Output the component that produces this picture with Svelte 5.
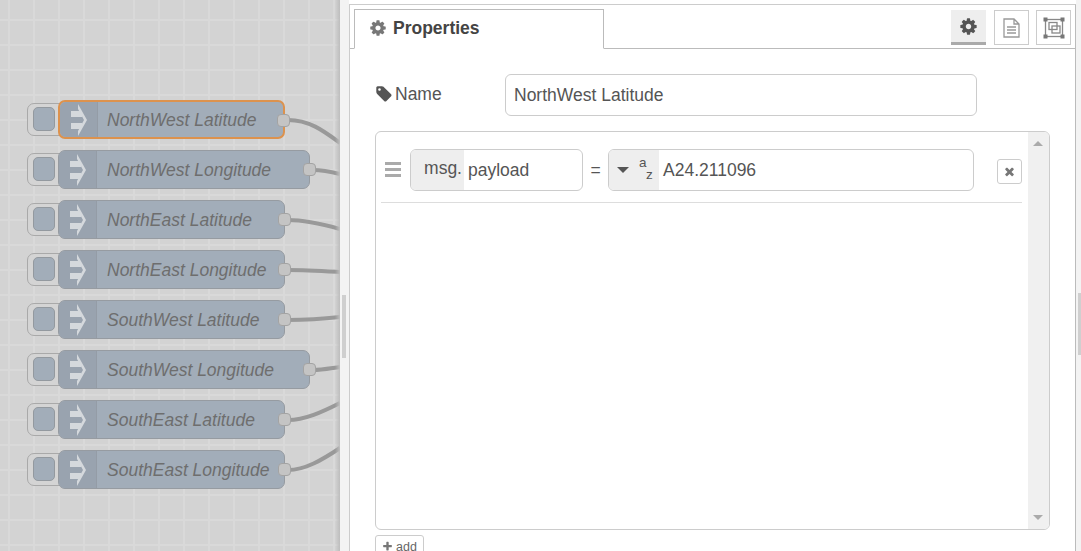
<script lang="ts">
  const cog = "M1152 896q0-106-75-181t-181-75-181 75-75 181 75 181 181 75 181-75 75-181zm512-109v222q0 12-8 23t-20 13l-185 28q-19 54-39 91 35 50 107 138 10 12 10 25t-9 23q-27 37-99 108t-94 71q-12 0-26-9l-138-108q-44 23-91 38-16 136-29 186-7 28-36 28h-222q-14 0-24.500-8.500t-11.500-21.500l-28-184q-49-16-90-37l-141 107q-10 9-25 9-14 0-25-11-126-114-165-168-7-10-7-23 0-12 8-23 15-21 51-66.500t54-70.500q-27-50-41-99l-183-27q-13-2-21-12.500t-8-23.500v-222q0-12 8-23t19-13l186-28q14-46 39-92-40-57-107-138-10-12-10-24 0-10 9-23 26-36 98.500-107.500t94.500-71.500q13 0 26 10l138 107q44-23 91-38 16-136 29-186 7-28 36-28h222q14 0 24.500 8.500t11.500 21.500l28 184q49 16 90 37l142-107q9-9 24-9 13 0 25 10 129 119 165 170 7 8 7 22 0 12-8 23-15 21-51 66.500t-54 70.500q26 50 41 98l183 28q13 2 21 12.500t8 23.500z";
  const tag = "M576 448q0-53-37.500-90.500t-90.500-37.500-90.500 37.500-37.500 90.500 37.500 90.500 90.500 37.500 90.500-37.500 37.500-90.500zm1067 576q0 53-37 90l-491 492q-39 37-91 37-53 0-90-37l-715-716q-38-37-64.500-101t-26.500-117v-416q0-52 38-90t90-38h416q53 0 117 26.500t102 64.500l715 714q37 39 37 91z";
  const plus = "M1600 736v192q0 40-28 68t-68 28h-416v416q0 40-28 68t-68 28h-192q-40 0-68-28t-28-68v-416h-416q-40 0-68-28t-28-68v-192q0-40 28-68t68-28h416v-416q0-40 28-68t68-28h192q40 0 68 28t28 68v416h416q40 0 68 28t28 68z";
  const times = "M1490 1322q0 40-28 68l-136 136q-28 28-68 28t-68-28l-294-294-294 294q-28 28-68 28t-68-28l-136-136q-28-28-28-68t28-68l294-294-294-294q-28-28-28-68t28-68l136-136q28-28 68-28t68 28l294 294 294-294q28-28 68-28t68 28l136 136q28 28 28 68t-28 68l-294 294 294 294q28 28 28 68z";

  const nodes = [
    { label: "NorthWest Latitude", width: 227, selected: true },
    { label: "NorthWest Longitude", width: 252 },
    { label: "NorthEast Latitude", width: 227 },
    { label: "NorthEast Longitude", width: 227 },
    { label: "SouthWest Latitude", width: 227 },
    { label: "SouthWest Longitude", width: 252 },
    { label: "SouthEast Latitude", width: 227 },
    { label: "SouthEast Longitude", width: 227 }
  ];

  const wires = [
    "M288 120 C310 120 325 132 340 143",
    "M313 170 C322 170 332 172 340 174",
    "M288 220 C305 220 322 224 340 229",
    "M288 270 C305 270 322 271 340 272",
    "M288 320 C305 320 322 319 340 317",
    "M313 370 C322 370 332 368 340 367",
    "M288 420 C305 420 322 412 340 403",
    "M288 470 C305 470 322 460 340 448"
  ];
</script>

<div class="app">
  <div class="canvas">
    <svg class="wires" width="340" height="551">
      {#each wires as d}
        <path {d} fill="none" stroke="#999" stroke-width="4" />
      {/each}
    </svg>

    {#each nodes as node, i}
      <div class="node-wrap" style="top: {100 + i * 50}px">
        <div class="inject"><div class="inject-inner"></div></div>
        <div class="node" class:selected={node.selected} style="width: {node.width}px">
          <div class="node-icon">
            <svg width="18" height="32" viewBox="0 0 18 32">
              <path d="M1 7h11v6H1zM1 19h11v6H1zM8 0l9 16-9 16v-5l6-11-6-11z" fill="#d5d9dd" />
            </svg>
          </div>
          <div class="node-label">{node.label}</div>
          <div class="port"></div>
        </div>
      </div>
    {/each}
    <div class="canvas-shade"></div>
  </div>

  <div class="sash"><div class="sash-handle"></div></div>

  <div class="panel">
    <div class="tabs">
      <div class="tab">
        <svg class="tab-icon" viewBox="0 0 1792 1792"><path d={cog} /></svg>
        <span>Properties</span>
      </div>
      <div class="tab-buttons">
        <div class="tab-button active">
          <svg width="19" height="19" viewBox="0 0 1792 1792"><path d={cog} fill="#555" /></svg>
        </div>
        <div class="tab-button">
          <svg width="17" height="20" viewBox="0 0 17 20" fill="none" stroke="#999" stroke-width="1.300">
            <path d="M1 1h10l5 5v13H1zM11 1v5h5" />
            <path d="M4 9h9M4 12h9M4 15h9" />
          </svg>
        </div>
        <div class="tab-button">
          <svg width="22" height="22" viewBox="0 0 22 22" fill="none" stroke="#888" stroke-width="1.300">
            <rect x="2.500" y="2.500" width="17" height="17" />
            <rect x="6" y="5.500" width="8" height="7" />
            <rect x="9" y="9" width="8" height="7" />
            <g fill="#777" stroke="none">
              <rect x="0.500" y="0.500" width="4" height="4" />
              <rect x="17.500" y="0.500" width="4" height="4" />
              <rect x="0.500" y="17.500" width="4" height="4" />
              <rect x="17.500" y="17.500" width="4" height="4" />
            </g>
          </svg>
        </div>
      </div>
    </div>

    <div class="form">
      <div class="form-row">
        <label class="name-label" for="node-name">
          <svg width="18" height="18" viewBox="0 0 1792 1792"><path d={tag} fill="#555" /></svg>
          Name
        </label>
        <input id="node-name" class="name-input" value="NorthWest Latitude" />
      </div>

      <div class="list">
        <div class="list-body">
          <div class="rule">
            <div class="handle"><span></span><span></span><span></span></div>
            <div class="typed msg">
              <div class="prefix msg-prefix">msg.</div>
              <div class="typed-value">payload</div>
            </div>
            <div class="equals">=</div>
            <div class="typed value">
              <div class="prefix type-prefix">
                <span class="caret"></span>
                <span class="az"><i>a</i><i>z</i></span>
              </div>
              <div class="typed-value">A24.211096</div>
            </div>
            <div class="delete">
              <svg width="13" height="13" viewBox="0 0 1792 1792"><path d={times} fill="#777" /></svg>
            </div>
          </div>
        </div>
        <div class="scrollbar">
          <span class="arrow up"></span>
          <span class="arrow down"></span>
        </div>
      </div>

      <div class="add">
        <svg width="11" height="11" viewBox="0 0 1792 1792"><path d={plus} fill="#777" /></svg>
        add
      </div>
    </div>
  </div>

  <div class="gutter"><div class="gutter-thumb"></div></div>
</div>

<style>
  :global(body) {
    margin: 0;
  }

  .app {
    display: flex;
    width: 1081px;
    height: 551px;
    overflow: hidden;
    font-family: "Liberation Sans", Arial, sans-serif;
    color: #555;
  }

  .canvas {
    position: relative;
    width: 340px;
    flex: none;
    overflow: hidden;
    background-color: #d3d3d3;
    background-image:
      linear-gradient(#d9d9d9 2px, transparent 2px),
      linear-gradient(90deg, #d9d9d9 2px, transparent 2px);
    background-size: 25px 25px;
    background-position: 8px 19px;
  }

  .canvas-shade {
    position: absolute;
    top: 0;
    right: 0;
    bottom: 0;
    width: 5px;
    background: linear-gradient(90deg, transparent, #bdbdbd);
  }

  .wires {
    position: absolute;
    left: 0;
    top: 0;
  }

  .node-wrap {
    position: absolute;
    left: 27px;
  }

  .inject {
    position: absolute;
    left: 0;
    top: 3px;
    width: 40px;
    height: 33px;
    box-sizing: border-box;
    border: 1.500px solid #a9a9a9;
    border-radius: 7px;
    background: #d4d4d4;
  }

  .inject-inner {
    width: 22px;
    height: 24px;
    margin: 3px 0 0 5px;
    box-sizing: border-box;
    border: 1.500px solid #93999f;
    border-radius: 5px;
    background: #a2adb9;
  }

  .node {
    position: relative;
    margin-left: 31px;
    height: 39px;
    box-sizing: border-box;
    display: flex;
    align-items: center;
    background: #a2adb9;
    border: 1.500px solid #969ba1;
    border-radius: 7px;
  }

  .node.selected {
    border: 2px solid #dc924e;
  }

  .node-icon {
    width: 38px;
    height: 100%;
    flex: none;
    box-sizing: border-box;
    display: flex;
    align-items: center;
    justify-content: center;
    background: #99a3af;
    border-right: 1px solid #949ca6;
    border-radius: 6px 0 0 6px;
  }

  .node-label {
    margin-left: 10px;
    padding-top: 2px;
    font-size: 17.500px;
    font-style: italic;
    color: #6e6e6e;
    white-space: nowrap;
  }

  .node.selected .node-label {
    margin-left: 9px;
  }

  .port {
    position: absolute;
    right: -7px;
    top: 12px;
    width: 13px;
    height: 13px;
    box-sizing: border-box;
    border: 1.500px solid #a3a3a3;
    border-radius: 4px;
    background: #c4c4c4;
  }

  .sash {
    width: 9px;
    flex: none;
    display: flex;
    align-items: center;
    justify-content: center;
    padding-right: 2px;
    box-sizing: border-box;
    background: #f3f3f3;
    position: relative;
  }

  .sash-handle {
    width: 4px;
    height: 63px;
    margin-top: 102px;
    background: #cfcfcf;
  }

  .panel {
    flex: 1;
    margin-top: 4px;
    box-sizing: border-box;
    display: flex;
    flex-direction: column;
    background: #fff;
    border-top: 1px solid #ccc;
    border-left: 1px solid #ccc;
    border-right: 1px solid #bbb;
  }

  .tabs {
    height: 44px;
    flex: none;
    box-sizing: border-box;
    display: flex;
    justify-content: space-between;
    align-items: flex-end;
    padding: 0 4px 0 4px;
    border-bottom: 1px solid #bbb;
  }

  .tab {
    width: 250px;
    height: 40px;
    margin-bottom: -1px;
    box-sizing: border-box;
    display: flex;
    align-items: center;
    gap: 6px;
    padding: 0 0 2px 14px;
    background: #fff;
    border: 1px solid #bbb;
    border-bottom: 1px solid #fff;
    font-size: 17.500px;
    font-weight: 700;
    color: #444;
  }

  .tab-icon {
    width: 18px;
    height: 18px;
    fill: #777;
  }

  .tab-buttons {
    display: flex;
    gap: 7px;
    align-self: flex-start;
    margin-top: 5px;
  }

  .tab-button {
    width: 35px;
    height: 35px;
    box-sizing: border-box;
    display: flex;
    align-items: center;
    justify-content: center;
    background: #fff;
    border: 1px solid #ccc;
  }

  .tab-button.active {
    margin-right: 1px;
    background: #eee;
    border: none;
    border-bottom: 3px solid #aaa;
  }

  .form {
    flex: 1;
    min-height: 0;
    padding: 25px 25px 0 25px;
    overflow: hidden;
  }

  .form-row {
    display: flex;
    align-items: center;
    height: 42px;
  }

  .name-label {
    width: 130px;
    display: flex;
    align-items: center;
    gap: 2px;
    font-size: 17.500px;
    margin-top: -2px;
  }

  .name-input {
    width: 472px;
    height: 42px;
    box-sizing: border-box;
    padding: 0 8px;
    border: 1px solid #ccc;
    border-radius: 6px;
    font: inherit;
    font-size: 17.500px;
    color: #555;
    outline: none;
  }

  .list {
    display: flex;
    width: 675px;
    height: 399px;
    margin-top: 15px;
    box-sizing: border-box;
    border: 1px solid #ccc;
    border-radius: 6px;
    overflow: hidden;
  }

  .list-body {
    flex: 1;
    min-width: 0;
    padding: 0 6px 0 5px;
  }

  .rule {
    height: 71px;
    box-sizing: border-box;
    display: flex;
    align-items: flex-start;
    padding-top: 17px;
    border-bottom: 1px solid #ddd;
  }

  .handle {
    width: 16px;
    margin: 13px 0 0 4px;
    display: flex;
    flex-direction: column;
    gap: 3px;
  }

  .handle span {
    height: 3px;
    background: #aaa;
  }

  .typed {
    height: 42px;
    box-sizing: border-box;
    display: flex;
    align-items: center;
    border: 1px solid #ccc;
    border-radius: 6px;
    overflow: hidden;
    font-size: 17.500px;
  }

  .typed.msg {
    width: 173px;
    margin-left: 9px;
  }

  .typed.value {
    width: 366px;
  }

  .prefix {
    height: 100%;
    flex: none;
    display: flex;
    align-items: center;
    background: #eee;
  }

  .msg-prefix {
    width: 53px;
    justify-content: flex-end;
    padding-right: 2px;
    padding-bottom: 3px;
    box-sizing: border-box;
  }

  .type-prefix {
    width: 50px;
    padding-left: 8px;
    box-sizing: border-box;
    gap: 10px;
  }

  .caret {
    width: 0;
    height: 0;
    border-left: 6px solid transparent;
    border-right: 6px solid transparent;
    border-top: 6px solid #555;
  }

  .az {
    display: flex;
    flex-direction: column;
    width: 14px;
    font-size: 13.500px;
    line-height: 12px;
    margin-top: -2px;
  }

  .az i {
    font-style: normal;
  }

  .az i:last-child {
    padding-left: 7px;
  }

  .typed-value {
    padding-left: 4px;
  }

  .equals {
    width: 25px;
    text-align: center;
    font-size: 17.500px;
    line-height: 42px;
  }

  .delete {
    width: 25px;
    height: 25px;
    margin: 10px 0 0 23px;
    box-sizing: border-box;
    display: flex;
    align-items: center;
    justify-content: center;
    border: 1px solid #ccc;
    border-radius: 3px;
  }

  .scrollbar {
    width: 21px;
    flex: none;
    position: relative;
    background: #f0f0f0;
  }

  .arrow {
    position: absolute;
    left: 5px;
    width: 0;
    height: 0;
    border-left: 5px solid transparent;
    border-right: 5px solid transparent;
  }

  .arrow.up {
    top: 9px;
    border-bottom: 5px solid #aaa;
  }

  .arrow.down {
    bottom: 9px;
    border-top: 5px solid #aaa;
  }

  .add {
    display: inline-flex;
    gap: 3px;
    margin-top: 5px;
    height: 30px;
    padding: 1px 6px 0;
    box-sizing: border-box;
    border: 1px solid #ccc;
    border-radius: 3px;
    font-size: 12.500px;
    color: #666;
    align-items: flex-start;
    line-height: 20px;
  }

  .add svg {
    margin-top: 4px;
  }

  .gutter {
    width: 5px;
    flex: none;
    padding-top: 293px;
    box-sizing: border-box;
    display: flex;
    justify-content: flex-end;
    background: #f3f3f3;
  }

  .gutter-thumb {
    width: 3px;
    height: 62px;
    background: #cfcfcf;
  }
</style>
